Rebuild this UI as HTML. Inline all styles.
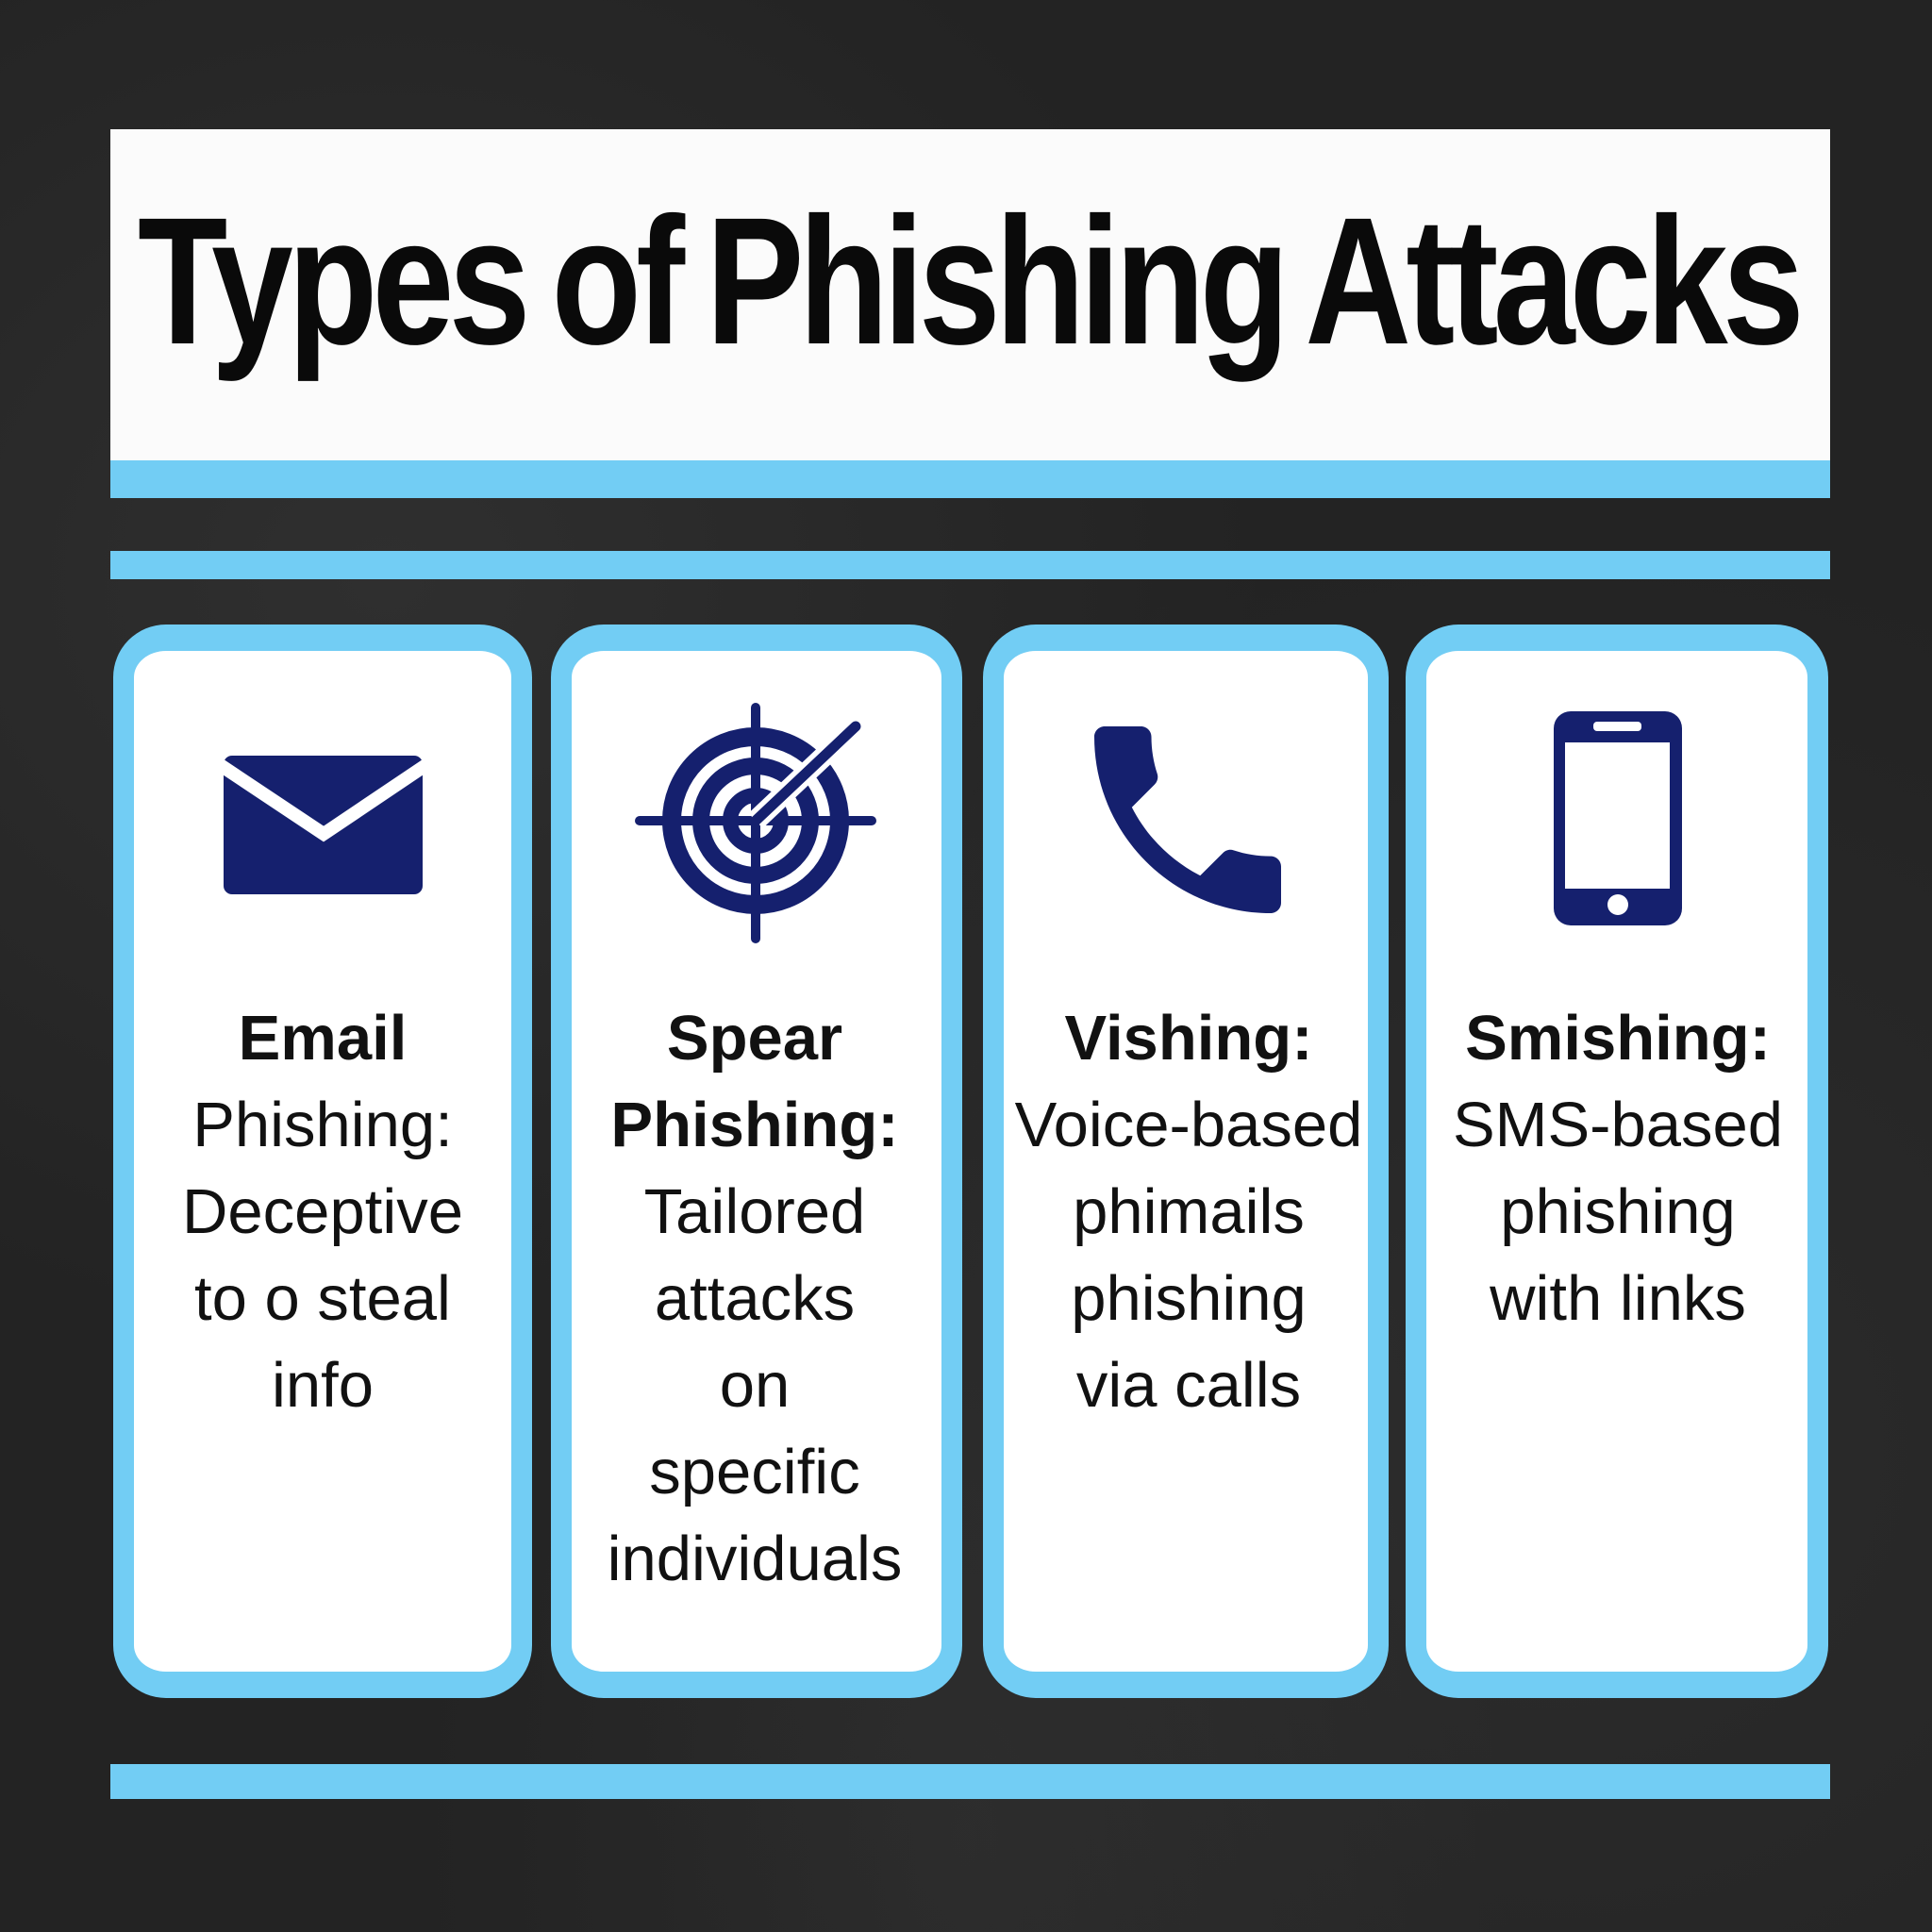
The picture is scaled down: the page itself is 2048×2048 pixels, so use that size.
<!DOCTYPE html>
<html><head><meta charset="utf-8"><style>
html,body{margin:0;padding:0}
body{width:2048px;height:2048px;position:relative;overflow:hidden;
background:
radial-gradient(ellipse at 20% 30%,rgba(70,70,70,.35),transparent 40%),
radial-gradient(ellipse at 80% 75%,rgba(60,60,60,.35),transparent 45%),
radial-gradient(ellipse at 50% 95%,rgba(55,55,55,.4),transparent 40%),
#232323;font-family:"Liberation Sans",sans-serif}
.bar{position:absolute;left:117px;width:1823px;background:#72cdf4}
.card{position:absolute;top:662px;height:1138px;box-sizing:border-box;background:#fff;border:solid #72cdf4;border-width:28px 22px 28px 22px;border-radius:56px}
.txt{position:absolute;top:1055px;width:440px;text-align:center;font-size:67px;line-height:92px;color:#111}
.txt b{font-weight:bold}
</style></head><body>
<div style="position:absolute;left:117px;top:137px;width:1823px;height:353px;background:#fbfbfb"></div>
<div class="bar" style="top:488px;height:40px"></div>
<div class="bar" style="top:584px;height:30px"></div>
<div class="bar" style="top:1870px;height:37px"></div>
<div class="card" style="left:120px;width:444px"></div>
<div class="card" style="left:584px;width:436px"></div>
<div class="card" style="left:1042px;width:430px"></div>
<div class="card" style="left:1490px;width:448px"></div>
<svg style="position:absolute;left:0;top:0" width="2048" height="2048" viewBox="0 0 2048 2048">
<text x="146" y="364" font-family="Liberation Sans" font-weight="bold" font-size="192" letter-spacing="-7" word-spacing="-12" textLength="1761" lengthAdjust="spacingAndGlyphs" fill="#0a0a0a">Types of Phishing Attacks</text>
<rect x="237" y="801" width="211" height="147" rx="9" fill="#15206e"/>
<polyline points="232,810 343,884 453,810" fill="none" stroke="#fff" stroke-width="14"/>
<g fill="none" stroke="#15206e">
<circle cx="801" cy="870" r="89" stroke-width="20"/>
<circle cx="801" cy="870" r="58" stroke-width="18"/>
<circle cx="801" cy="870" r="27" stroke-width="16"/>
<g stroke-width="10" stroke-linecap="round"><line x1="801" y1="750" x2="801" y2="995"/><line x1="678" y1="870" x2="924" y2="870"/></g>
</g>
<line x1="801" y1="870" x2="907" y2="770" stroke="#fff" stroke-width="22"/>
<line x1="801" y1="870" x2="907" y2="770" stroke="#15206e" stroke-width="11" stroke-linecap="round"/>
<path transform="translate(1127,737) scale(11)" fill="#15206e" d="M6.62 10.79c1.44 2.83 3.76 5.14 6.59 6.59l2.2-2.2c.27-.27.67-.36 1.02-.24 1.12.37 2.330.57 3.570.57.55 0 1 .45 1 1V20c0 .55-.45 1-1 1-9.39 0-17-7.610-17-17 0-.55.45-1 1-1h3.5c.55 0 1 .45 1 1 0 1.25.2 2.45.57 3.57.11.35.03.74-.25 1.02l-2.2 2.2z"/>
<rect x="1647" y="754" width="136" height="227" rx="18" fill="#15206e"/>
<rect x="1659" y="787" width="111" height="155" fill="#fff"/>
<rect x="1689" y="765" width="51" height="10" rx="4" fill="#fff"/>
<circle cx="1715" cy="959" r="11" fill="#fff"/>
</svg>
<div class="txt" style="left:122px"><b>Email</b><br>Phishing:<br>Deceptive<br>to o steal<br>info</div>
<div class="txt" style="left:580px"><b>Spear</b><br><b>Phishing:</b><br>Tailored<br>attacks<br>on<br>specific<br>individuals</div>
<div class="txt" style="left:1040px"><b>Vishing:</b><br>Voice-based<br>phimails<br>phishing<br>via calls</div>
<div class="txt" style="left:1495px"><b>Smishing:</b><br>SMS-based<br>phishing<br>with links</div>
</body></html>
